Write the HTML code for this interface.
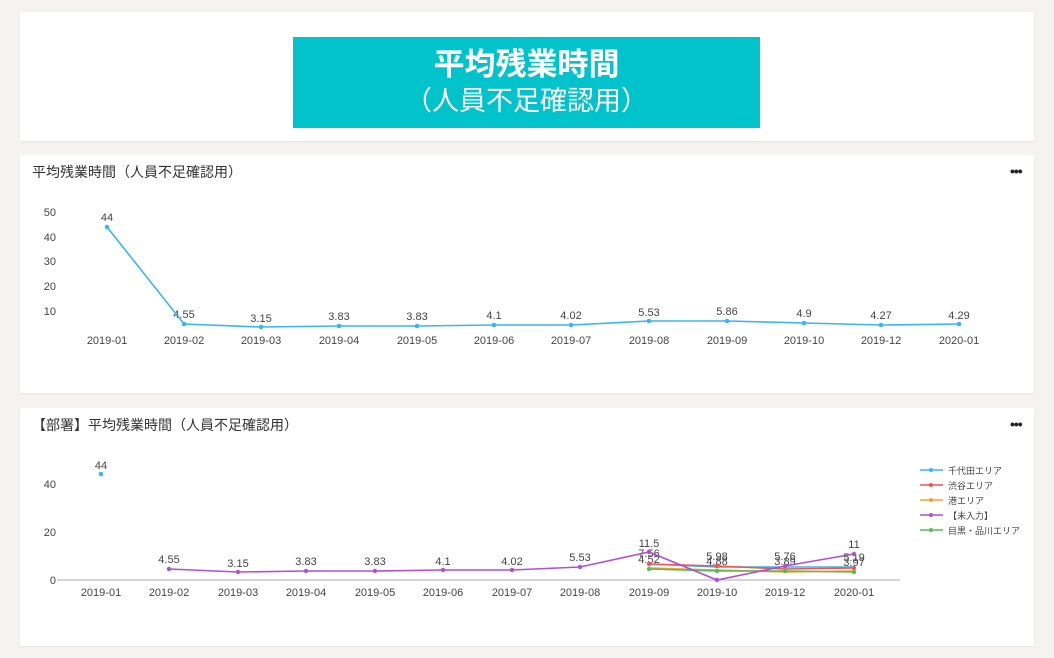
<!DOCTYPE html>
<html><head><meta charset="utf-8"><style>
body{margin:0;width:1054px;height:658px;background:#f4f3f1;font-family:"Liberation Sans","Noto Sans CJK JP",sans-serif;position:relative;overflow:hidden}
.card{position:absolute;left:20px;width:1014px;background:#fff;box-shadow:0 1px 2px rgba(0,0,0,.06)}
.banner{position:absolute;left:293px;top:37px;width:467px;height:91px;background:#00c3cb;color:#fff;text-align:center}
.t1{font-size:31px;font-weight:bold;margin-top:9px;line-height:38px}
.t2{font-size:27px;line-height:34px}
.title{position:absolute;font-size:14px;color:#333}
.dots{position:absolute;font-size:14px;font-weight:bold;color:#222;letter-spacing:-1px}
svg{position:absolute;left:0;top:0}
text{font-family:"Liberation Sans","DejaVu Sans","Noto Sans CJK JP",sans-serif;font-size:11px;fill:#444}
</style></head><body>
<div class="card" style="top:12px;height:129px"></div>
<div class="banner"><div class="t1">平均残業時間</div><div class="t2">（人員不足確認用）</div></div>
<div class="card" style="top:155px;height:238px"></div>
<div class="card" style="top:408px;height:238px"></div>
<div class="title" style="left:32px;top:162px">平均残業時間（人員不足確認用）</div>
<div class="dots" style="left:1010px;top:163px">•••</div>
<div class="title" style="left:32px;top:415px">【部署】平均残業時間（人員不足確認用）</div>
<div class="dots" style="left:1010px;top:416px">•••</div>
<svg width="1054" height="658">
<g text-anchor="end"><text x="56" y="216">50</text><text x="56" y="241">40</text><text x="56" y="265">30</text><text x="56" y="290">20</text><text x="56" y="315">10</text></g>
<g text-anchor="middle">
<text x="107" y="344">2019-01</text><text x="184" y="344">2019-02</text><text x="261" y="344">2019-03</text><text x="339" y="344">2019-04</text><text x="417" y="344">2019-05</text><text x="494" y="344">2019-06</text><text x="571" y="344">2019-07</text><text x="649" y="344">2019-08</text><text x="727" y="344">2019-09</text><text x="804" y="344">2019-10</text><text x="881" y="344">2019-12</text><text x="959" y="344">2020-01</text>
<text x="107" y="221">44</text><text x="184" y="318">4.55</text><text x="261" y="322">3.15</text><text x="339" y="320">3.83</text><text x="417" y="320">3.83</text><text x="494" y="319">4.1</text><text x="571" y="319">4.02</text><text x="649" y="316">5.53</text><text x="727" y="315">5.86</text><text x="804" y="317">4.9</text><text x="881" y="319">4.27</text><text x="959" y="319">4.29</text>
</g>
<polyline fill="none" stroke="#3bb4f5" stroke-width="1.6" points="107,227 184,324 261,327 339,326 417,326 494,325 571,325 649,321 727,321 804,323 881,325 959,324"/>
<g fill="#3bb4f5"><circle cx="107" cy="227" r="2.3"/><circle cx="184" cy="324" r="2.3"/><circle cx="261" cy="327" r="2.3"/><circle cx="339" cy="326" r="2.3"/><circle cx="417" cy="326" r="2.3"/><circle cx="494" cy="325" r="2.3"/><circle cx="571" cy="325" r="2.3"/><circle cx="649" cy="321" r="2.3"/><circle cx="727" cy="321" r="2.3"/><circle cx="804" cy="323" r="2.3"/><circle cx="881" cy="325" r="2.3"/><circle cx="959" cy="324" r="2.3"/></g>

<g text-anchor="end"><text x="56" y="488">40</text><text x="56" y="536">20</text><text x="56" y="584">0</text></g>
<line x1="57" y1="580" x2="900" y2="580" stroke="#aaa" stroke-width="1"/>
<g text-anchor="middle">
<text x="101" y="596">2019-01</text><text x="169" y="596">2019-02</text><text x="238" y="596">2019-03</text><text x="306" y="596">2019-04</text><text x="375" y="596">2019-05</text><text x="443" y="596">2019-06</text><text x="512" y="596">2019-07</text><text x="580" y="596">2019-08</text><text x="649" y="596">2019-09</text><text x="717" y="596">2019-10</text><text x="785" y="596">2019-12</text><text x="854" y="596">2020-01</text>
<text x="101" y="469">44</text><text x="169" y="563">4.55</text><text x="238" y="567">3.15</text><text x="306" y="565">3.83</text><text x="375" y="565">3.83</text><text x="443" y="565">4.1</text><text x="512" y="565">4.02</text><text x="580" y="561">5.53</text><text x="649" y="547">11.5</text><text x="649" y="557">7.56</text><text x="649" y="563">4.52</text><text x="717" y="560">5.98</text><text x="717" y="565">4.88</text><text x="785" y="560">5.76</text><text x="785" y="565">3.89</text><text x="854" y="548">11</text><text x="854" y="561">5.19</text><text x="854" y="566">3.97</text>
</g>
<circle cx="101" cy="474" r="2.3" fill="#3bb4f5"/>
<polyline fill="none" stroke="#3bb4f5" stroke-width="1.6" points="649,564 717,567 785,567 854,567"/>
<polyline fill="none" stroke="#ee5555" stroke-width="1.6" points="649,564 717,566 785,569 854,568"/>
<polyline fill="none" stroke="#f5a030" stroke-width="1.6" points="649,568 717,570 785,572 854,571"/>
<polyline fill="none" stroke="#55bb55" stroke-width="1.6" points="649,569 717,571 785,571 854,572"/>
<polyline fill="none" stroke="#b050d0" stroke-width="1.6" points="169,569 238,572 306,571 375,571 443,570 512,570 580,567 649,552 717,580 785,566 854,554"/>
<g fill="#b050d0"><circle cx="169" cy="569" r="2.2"/><circle cx="238" cy="572" r="2.2"/><circle cx="306" cy="571" r="2.2"/><circle cx="375" cy="571" r="2.2"/><circle cx="443" cy="570" r="2.2"/><circle cx="512" cy="570" r="2.2"/><circle cx="580" cy="567" r="2.2"/><circle cx="649" cy="552" r="2.2"/><circle cx="717" cy="580" r="2.2"/><circle cx="785" cy="566" r="2.2"/><circle cx="854" cy="554" r="2.2"/></g>
<g fill="#55bb55"><circle cx="649" cy="569" r="2.2"/><circle cx="717" cy="571" r="2.2"/><circle cx="785" cy="571" r="2.2"/><circle cx="854" cy="572" r="2.2"/></g>
<g fill="#ee5555"><circle cx="649" cy="564" r="2.2"/><circle cx="717" cy="566" r="2.2"/><circle cx="854" cy="568" r="2.2"/></g>
<g font-size="9">
<line x1="920" y1="470" x2="943" y2="470" stroke="#3bb4f5" stroke-width="1.5"/><circle cx="931" cy="470" r="2" fill="#3bb4f5"/><text x="948" y="474" style="font-size:9px">千代田エリア</text>
<line x1="920" y1="485" x2="943" y2="485" stroke="#ee5555" stroke-width="1.5"/><circle cx="931" cy="485" r="2" fill="#ee5555"/><text x="948" y="489" style="font-size:9px">渋谷エリア</text>
<line x1="920" y1="500" x2="943" y2="500" stroke="#f5a030" stroke-width="1.5"/><circle cx="931" cy="500" r="2" fill="#f5a030"/><text x="948" y="504" style="font-size:9px">港エリア</text>
<line x1="920" y1="515" x2="943" y2="515" stroke="#b050d0" stroke-width="1.5"/><circle cx="931" cy="515" r="2" fill="#b050d0"/><text x="948" y="519" style="font-size:9px">【未入力】</text>
<line x1="920" y1="530" x2="943" y2="530" stroke="#55bb55" stroke-width="1.5"/><circle cx="931" cy="530" r="2" fill="#55bb55"/><text x="948" y="534" style="font-size:9px">目黒・品川エリア</text>
</g>
</svg>
</body></html>
